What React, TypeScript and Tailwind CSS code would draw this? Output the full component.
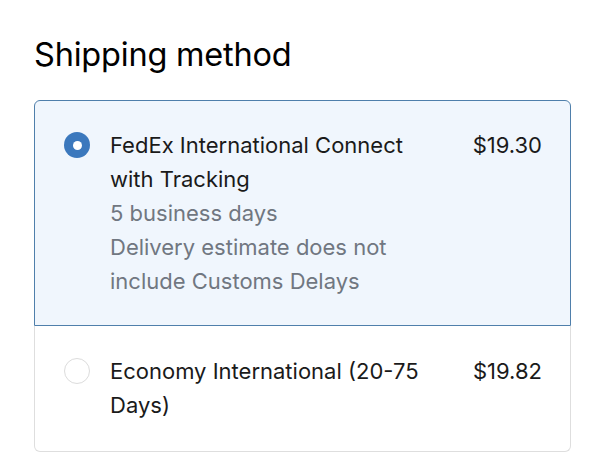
import React from "react";

export default function App() {
  return (
    <div className="w-[600px] h-[461px] bg-white text-[#1a1a1a] overflow-hidden" style={{ fontFamily: "Inter, 'Noto Sans', sans-serif" }}>
      <div className="pl-[34px] pr-[29px] pt-[35px]">
        <h2 className="text-[32.5px] leading-[40px] font-normal tracking-[-0.2px] text-black">Shipping method</h2>
        <div className="mt-[25px]">
          <div className="flex items-start pl-[29px] pr-[28px] pt-[27px] pb-[27px] bg-[#f0f6fd] border border-[#4f7fab] rounded-t-[6px]">
            <div className="mt-[4px] w-[26px] h-[26px] rounded-full bg-[#3b78bd] flex items-center justify-center shrink-0">
              <div className="w-[9px] h-[9px] rounded-full bg-white" />
            </div>
            <div className="ml-[20px] flex-1 text-[22px] leading-[34px]">
              <div className="text-[#1a1a1a]">FedEx International Connect with Tracking</div>
              <div className="text-[#707781]">5 business days</div>
              <div className="text-[#707781]">Delivery estimate does not include Customs Delays</div>
            </div>
            <div className="ml-[27px] text-[22px] leading-[34px] text-[#1a1a1a]">$19.30</div>
          </div>
          <div className="flex items-start pl-[29px] pr-[28px] pt-[28px] pb-[29px] bg-white border border-t-0 border-[#dedede] rounded-b-[6px]">
            <div className="mt-[4px] w-[26px] h-[26px] rounded-full border border-[#dcdcdc] bg-white shrink-0" />
            <div className="ml-[20px] flex-1 text-[22px] leading-[34px] text-[#1a1a1a]">Economy International (20-75 Days)</div>
            <div className="ml-[27px] text-[22px] leading-[34px] text-[#1a1a1a]">$19.82</div>
          </div>
        </div>
      </div>
    </div>
  );
}
